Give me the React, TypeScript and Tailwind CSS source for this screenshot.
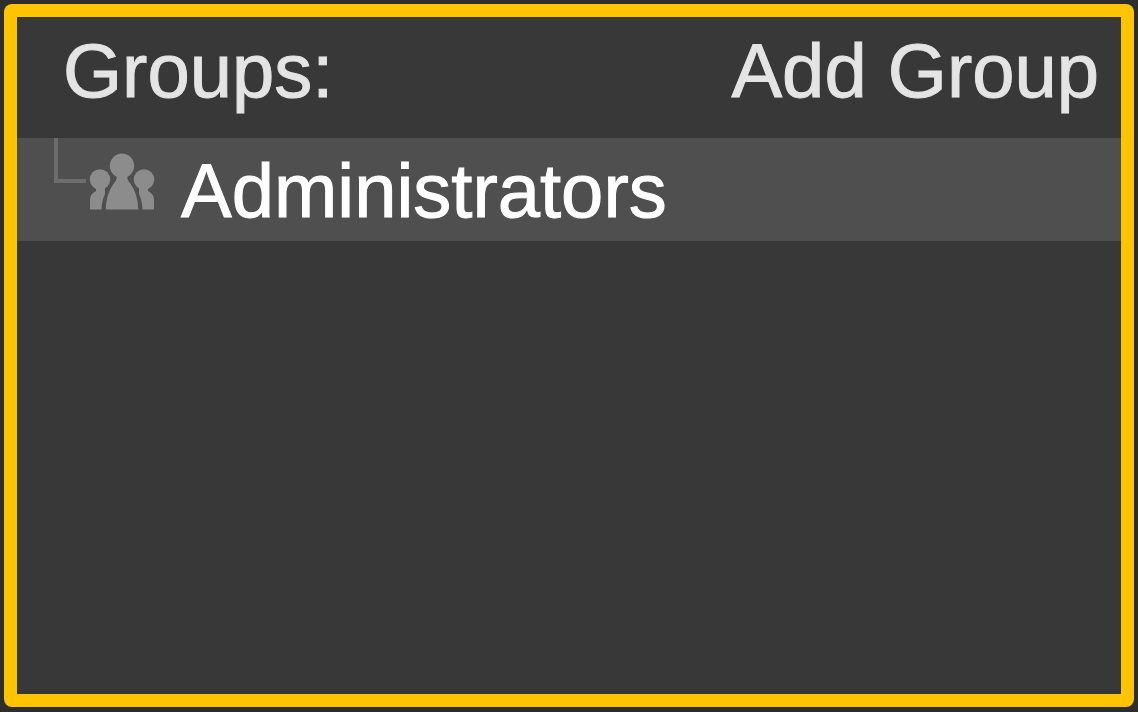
function GroupIcon() {
  return (
    <svg viewBox="0 0 66 57" className="h-[57px] w-[66px] shrink-0" fill="#8c8c8c" aria-hidden="true">
      <circle cx="33" cy="12.8" r="12.2" />
      <path d="M28 22H38Q38 27 41 30Q49 41 49.3 56.5H16.7Q17 41 25 30Q28 27 28 22Z" />
      <circle cx="11" cy="26.5" r="10.3" />
      <path d="M7 34H16V41Q13 47 12.5 56.5H1V47Q1 41 7 38Z" />
      <circle cx="55" cy="26.5" r="10.3" />
      <path d="M59 34H50V41Q53 47 53.5 56.5H65V47Q65 41 59 38Z" />
    </svg>
  );
}

function Header() {
  return (
    <header className="flex h-[121px] items-center justify-between pr-[22px] pb-3.5 pl-[46px] text-[#e4e4e4]">
      <h1 id="groups-title">Groups:</h1>
      <button type="button" className="whitespace-nowrap">
        Add Group
      </button>
    </header>
  );
}

function GroupRow({ name }: { name: string }) {
  return (
    <li className="flex h-[103px] bg-[#4f4f4f] text-white">
      <span
        className="mr-[3px] ml-[37px] h-[45px] w-8 shrink-0 border-b-4 border-l-4 border-[#6d6d6d]"
        aria-hidden="true"
      />
      <button type="button" className="flex flex-1 gap-[26px] text-left">
        <span className="pt-[15px]">
          <GroupIcon />
        </span>
        <span className="self-center pt-0.5">{name}</span>
      </button>
    </li>
  );
}

export default function App() {
  return (
    <div className="flex min-h-screen flex-col bg-[#2d2d2d] px-1 pt-1 pb-[5px] font-['Liberation_Sans',Arial,sans-serif] text-[76px] leading-[88px] [-webkit-text-stroke:1px_currentColor]">
      <main className="flex flex-1 flex-col rounded-lg bg-[#ffc400] p-[13px]">
        <section className="flex-1 bg-[#383838]" aria-labelledby="groups-title">
          <Header />
          <ul>
            <GroupRow name="Administrators" />
          </ul>
        </section>
      </main>
    </div>
  );
}
